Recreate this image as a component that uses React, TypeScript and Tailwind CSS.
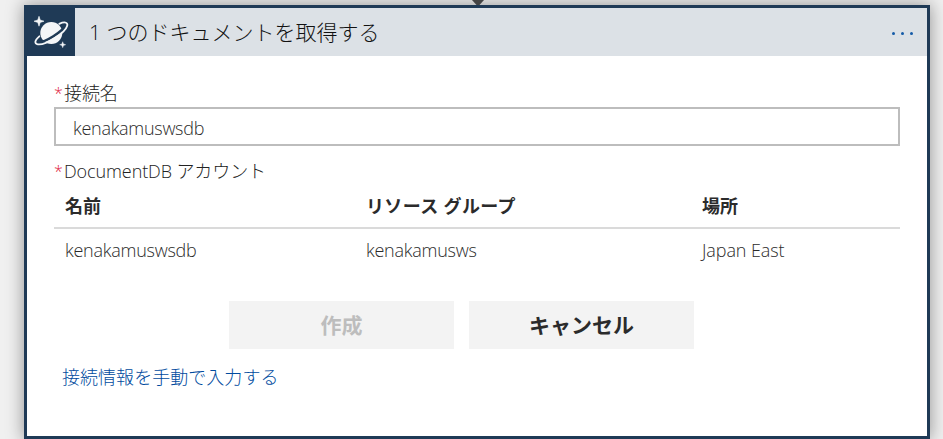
function PlanetIcon() {
  return (
    <svg viewBox="0 0 48 48" className="h-12 w-12" aria-hidden="true">
      <circle cx="24.300" cy="25" r="11" fill="#f4f6f8" />
      <g transform="rotate(-32 24.3 25.2)" fill="none">
        <path d="M12.500 22.500C6.500 23 5.500 25.200 7.500 27C13 31.500 36 31.500 41 27C43 25.200 42 23 36 22.500" transform="translate(0 -1.500)" stroke="#1f3a56" strokeWidth="2.600" />
        <path d="M12.500 21.500C5.500 22.500 4.500 25.500 7 27.500C13 32.500 36 32.500 41.500 27.500C44 25.500 43 22.500 36 21.500" stroke="#f4f6f8" strokeWidth="1.800" strokeLinecap="round" />
      </g>
      <path d="M12 8.300L13.200 12L17 13.200L13.200 14.400L12 18.200L10.800 14.400L7 13.200L10.800 12Z" fill="#f4f6f8" stroke="#f4f6f8" strokeWidth="0.6" />
      <path d="M35.700 33.700L36.500 35.900L38.700 36.700L36.500 37.500L35.700 39.700L34.900 37.500L32.700 36.700L34.900 35.900Z" fill="#f4f6f8" stroke="#f4f6f8" strokeWidth="0.4" />
    </svg>
  );
}

function FieldLabel({ children }: { children: React.ReactNode }) {
  return (
    <div className="flex h-6 items-center text-[18px] leading-6 tracking-[-0.1px] text-[#222]">
      <span className="w-[10px] text-[16px] text-[#e0243f]">*</span>
      {children}
    </div>
  );
}

export default function App() {
  return (
    <div className="h-[439px] overflow-hidden bg-[#f0f0f0] font-['Open_Sans','Noto_Sans_CJK_JP',sans-serif] font-light text-[#2b2b2b]">
      <div className="flex h-[5px] justify-center pl-3">
        <svg viewBox="0 0 12 5" className="relative z-10 h-[5px] w-3"><path d="M0 0H12L7.500 5H4.500Z" fill="#444" /></svg>
      </div>
      <main className="ml-6 h-[434px] w-[906px] border-[3px] border-[#1f3a56] bg-white shadow-[0_0_16px_1px_rgba(0,0,0,0.36)]">
        <header className="flex h-12 items-center bg-[#dce1e6]">
          <div className="h-12 w-12 bg-[#1f3a56]"><PlanetIcon /></div>
          <h1 className="ml-[14px] flex-1 whitespace-nowrap text-[21px] leading-8 text-[#111]">1 つのドキュメントを取得する</h1>
          <div className="mr-[14px] flex gap-[6px] pt-[2px]">
            <i className="h-[3px] w-[3px] rounded-full bg-[#155ba8]" />
            <i className="h-[3px] w-[3px] rounded-full bg-[#155ba8]" />
            <i className="h-[3px] w-[3px] rounded-full bg-[#155ba8]" />
          </div>
        </header>
        <section className="px-[27px] pt-[25px]">
          <FieldLabel>接続名</FieldLabel>
          <input className="mt-[2px] block h-[39px] w-full border-2 border-[#bdbdbd] bg-white px-[17px] pt-[2px] text-[18px] font-light tracking-[-0.28px] outline-none" defaultValue="kenakamuswsdb" />
          <div className="mt-[13px]"><FieldLabel>DocumentDB アカウント</FieldLabel></div>
          <div className="grid h-[46px] grid-cols-[301px_336px_1fr] items-center border-b-2 border-[#dadada] pl-[11px] pt-[2px] text-[18px] font-bold">
            <span>名前</span><span className="tracking-[0.35px]">リソース グループ</span><span>場所</span>
          </div>
          <div className="grid h-[44px] grid-cols-[301px_336px_1fr] items-center pb-[2px] pl-[11px] text-[18px] tracking-[-0.25px]">
            <span>kenakamuswsdb</span><span>kenakamusws</span><span className="tracking-[-0.1px]">Japan East</span>
          </div>
          <div className="mt-7 flex justify-center gap-[15px] pr-[31px] text-[21px] font-bold">
            <button className="h-12 w-[225px] bg-[#f3f3f3] pt-[2px] text-[#bdbdbd]">作成</button>
            <button className="h-12 w-[225px] bg-[#f3f3f3] pt-[2px]">キャンセル</button>
          </div>
          <a className="ml-2 mt-[14px] block text-[18px] leading-7 tracking-[0.04px] text-[#004b9e]">接続情報を手動で入力する</a>
        </section>
      </main>
    </div>
  );
}
